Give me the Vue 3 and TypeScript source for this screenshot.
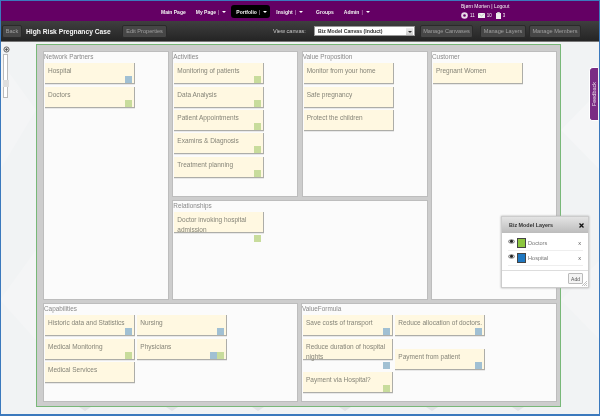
<script setup lang="ts">
interface Note { text: string; tags: string[]; spaced?: boolean }
const n = (text: string, tags: string[] = [], spaced = false): Note => ({ text, tags, spaced })

const partners = [n('Hospital', ['blue']), n('Doctors', ['green'])]
const activities = [
  n('Monitoring of patients', ['green']), n('Data Analysis', ['green']), n('Patient Appointments', ['green']),
  n('Examins & Diagnosis', ['green']), n('Treatment planning', ['green'])
]
const value = [n('Monitor from your home'), n('Safe pregnancy'), n('Protect the children')]
const customer = [n('Pregnant Women')]
const relationships = [n('Doctor invoking hospital admission', ['green'])]
const capA = [n('Historic data and Statistics', ['blue']), n('Medical Monitoring', ['green']), n('Medical Services')]
const capB = [n('Nursing', ['blue']), n('Physicians', ['blue', 'green'])]
const vfA = [n('Save costs of transport', ['blue']), n('Reduce duration of hospital nights', ['blue'], true), n('Payment via Hospital?', ['green'])]
const vfB = [n('Reduce allocation of doctors.', ['blue'], true), n('Payment from patient', ['blue'])]

const cells = [
  { cls: 'c-partners', title: 'Network Partners', cols: [partners] },
  { cls: 'c-activities', title: 'Activities', cols: [activities] },
  { cls: 'c-value', title: 'Value Proposition', cols: [value] },
  { cls: 'c-customer', title: 'Customer', cols: [customer] },
  { cls: 'c-rel', title: 'Relationships', cols: [relationships] }
]
const bottom = [
  { cls: '', title: 'Capabilities', cols: [capA, capB] },
  { cls: '', title: 'ValueFormula', cols: [vfA, vfB] }
]
const layers = [
  { name: 'Doctors', color: '#8cc63f' },
  { name: 'Hospital', color: '#1f78c1' }
]
const notches = [85, 172, 258, 345, 432, 518]
const notchPoints = (x: number): string => `${x - 6},407 ${x + 6},407 ${x},411`
</script>

<template>
  <div class="frame">
    <svg class="bg" viewBox="0 0 600 416" aria-hidden="true">
      <polygon points="0,60 36,110 0,170" fill="#f4f5f6" />
      <polygon points="561,130 600,90 600,170" fill="#f5f6f7" />
      <polygon points="0,300 36,250 36,340" fill="#f4f5f6" />
      <polygon points="561,300 600,340 600,260" fill="#f4f5f6" />
      <polygon v-for="x in notches" :key="x" :points="notchPoints(x)" fill="#e1e3e5" />
    </svg>

    <header class="topbar">
      <nav class="nav">
        <span class="nav-item main">Main Page</span>
        <span class="nav-item mypage">My Page<i class="sep">|</i><i class="caret"></i></span>
        <span class="nav-item active">Portfolio<i class="sep">|</i><i class="caret"></i></span>
        <span class="nav-item insight">Insight<i class="sep">|</i><i class="caret"></i></span>
        <span class="nav-item groups">Groups</span>
        <span class="nav-item admin">Admin<i class="sep">|</i><i class="caret"></i></span>
      </nav>
      <div class="user">
        <div class="user-name">Bjørn Morten | Logout</div>
        <div class="user-icons">
          <svg width="7" height="7" viewBox="0 0 7 7"><circle cx="3.5" cy="3.5" r="3.3" fill="#e8dce8" /><circle cx="3.5" cy="3.5" r="1.3" fill="#660066" /></svg>
          <span class="count c1">11</span>
          <svg width="7" height="5" viewBox="0 0 7 5"><rect width="7" height="5" fill="#eee" /><path d="M0 0l3.5 3L7 0" fill="none" stroke="#999" stroke-width=".5" /></svg>
          <span class="count c2">10</span>
          <svg width="5" height="7" viewBox="0 0 5 7"><rect y="1" width="5" height="6" fill="#eee" /><rect x="1.2" width="2.6" height="1.4" fill="#ccc" /></svg>
          <span class="count">3</span>
        </div>
      </div>
    </header>

    <div class="toolbar">
      <button class="btn back">Back</button>
      <span class="case-title">High Risk Pregnancy Case</span>
      <button class="btn edit">Edit Properties</button>
      <span class="view-label">View canvas:</span>
      <div class="select">
        <span>Biz Model Canvas (Induct)</span>
        <i class="select-arrow"></i>
      </div>
      <button class="btn canv">Manage Canvases</button>
      <button class="btn lay">Manage Layers</button>
      <button class="btn mem">Manage Members</button>
    </div>

    <div class="stage">
      <div class="zoom">
        <svg class="zoom-icon" width="7" height="7" viewBox="0 0 7 7"><circle cx="3.5" cy="3.5" r="2.6" fill="#ddd" stroke="#666" stroke-width="1" /><path d="M2 3.5h3M3.5 2v3" stroke="#444" stroke-width=".7" /></svg>
        <div class="zoom-track"><div class="zoom-thumb"></div></div>
      </div>

      <main class="canvas">
        <div class="top-grid">
          <section v-for="c in cells" :key="c.title" class="cell" :class="c.cls">
            <h3 class="cell-title">{{ c.title }}</h3>
            <div class="cell-body">
              <div v-for="(col, i) in c.cols" :key="i" class="col">
                <article v-for="note in col" :key="note.text" class="note" :class="{ spaced: note.spaced }">
                  <p class="note-text">{{ note.text }}</p>
                  <div class="tags"><b v-for="t in note.tags" :key="t" class="tag" :class="t"></b></div>
                </article>
              </div>
            </div>
          </section>
        </div>
        <div class="bottom-grid">
          <section v-for="c in bottom" :key="c.title" class="cell">
            <h3 class="cell-title">{{ c.title }}</h3>
            <div class="cell-body">
              <div v-for="(col, i) in c.cols" :key="i" class="col">
                <article v-for="note in col" :key="note.text" class="note" :class="{ spaced: note.spaced }">
                  <p class="note-text">{{ note.text }}</p>
                  <div class="tags"><b v-for="t in note.tags" :key="t" class="tag" :class="t"></b></div>
                </article>
              </div>
            </div>
          </section>
        </div>
      </main>
    </div>

    <div class="feedback"><span>Feedback</span></div>

    <aside class="layers">
      <div class="layers-head">
        <span>Biz Model Layers</span>
        <svg class="close" width="5" height="5" viewBox="0 0 5 5"><path d="M.5 .5l4 4M4.5 .5l-4 4" stroke="#111" stroke-width="1.3" /></svg>
      </div>
      <div class="layers-list">
        <div v-for="l in layers" :key="l.name" class="layer-row">
          <svg class="eye" width="7" height="5" viewBox="0 0 7 5"><path d="M0 2.5C1.5 .3 5.5 .3 7 2.5 5.5 4.7 1.5 4.7 0 2.5z" fill="#ddd" stroke="#333" stroke-width=".6" /><circle cx="3.5" cy="2.3" r="1.5" fill="#222" /></svg>
          <i class="swatch" :style="{ background: l.color }"></i>
          <span class="layer-name">{{ l.name }}</span>
          <span class="layer-x">x</span>
        </div>
      </div>
      <div class="layers-foot"><button class="add">Add</button></div>
      <svg class="grip" width="5" height="5" viewBox="0 0 5 5"><path d="M5 0L0 5M5 2L2 5M5 4L4 5" stroke="#999" stroke-width=".6" /></svg>
    </aside>
  </div>
</template>

<style>
html, body { margin: 0; padding: 0; }
</style>

<style scoped>
.frame {
  position: relative;
  width: 600px;
  height: 416px;
  box-sizing: border-box;
  overflow: hidden;
  border: solid #3b79bd;
  border-width: 1px 1px 2px 1px;
  background: #f1f3f4;
  font-family: "Liberation Sans", Arial, sans-serif;
  display: flex;
  flex-direction: column;
  filter: blur(0.3px);
}
.bg { position: absolute; left: -1px; top: -1px; width: 600px; height: 416px; }

.topbar {
  position: relative;
  height: 20px;
  flex: none;
  background: #640064;
  color: #f2f2f2;
  font-size: 5px;
  font-weight: 700;
}
.nav { position: absolute; left: 0; top: 4px; display: flex; align-items: center; height: 13px; }
.nav-item { white-space: nowrap; display: flex; align-items: center; height: 13px; }
.main { margin-left: 160px; }
.mypage { margin-left: 10px; }
.active { margin-left: 5px; padding: 0 7px 0 5px; background: #000; border-radius: 3px; width: 27px; }
.insight { margin-left: 6px; }
.groups { margin-left: 13px; }
.admin { margin-left: 10px; }
.sep { font-style: normal; font-weight: 400; margin: 0 2px 0 2px; color: #d9bcd9; }
.caret { width: 0; height: 0; border: 1.5px solid transparent; border-top: 2px solid #fff; border-bottom: 0; margin-left: 1px; border-left-width: 2px; border-right-width: 2px; }
.user { position: absolute; left: 460px; top: 2px; }
.user-name { font-weight: 400; font-size: 5px; line-height: 6px; white-space: nowrap; }
.user-icons { display: flex; align-items: center; height: 8px; margin-top: 2px; font-weight: 400; }
.count { margin-left: 2px; font-size: 4.5px; }
.c1 { margin-right: 3px; }
.c2 { margin-right: 4px; }

.toolbar {
  flex: none;
  height: 20px;
  display: flex;
  align-items: center;
  background: linear-gradient(#3f3f3f, #242424);
  border-bottom: 1px solid #777;
  box-sizing: content-box;
  color: #c8c8c8;
  font-size: 5.6px;
}
.btn {
  font: 5.6px "Liberation Sans", Arial, sans-serif;
  height: 13px;
  padding: 0;
  color: #a0a0a0;
  background: #464646;
  border: 1px solid #2a2a2a;
  border-radius: 2px;
  white-space: nowrap;
}
.back { margin-left: 1px; width: 20px; }
.case-title { margin-left: 4px; width: 96px; color: #f6f6f6; font-weight: 700; font-size: 6.7px; white-space: nowrap; }
.edit { width: 45px; }
.view-label { margin-left: 106px; width: 41px; white-space: nowrap; }
.select {
  width: 101px;
  height: 10px;
  box-sizing: border-box;
  background: #fff;
  border: 1px solid #999;
  display: flex;
  align-items: center;
  justify-content: space-between;
  padding: 0 1px 0 3px;
  color: #333;
  font-weight: 700;
  font-size: 5.2px;
  white-space: nowrap;
}
.select-arrow { width: 7px; height: 7px; background: linear-gradient(#eee, #ccc); position: relative; border: 0; }
.select-arrow::after { content: ""; position: absolute; left: 1.5px; top: 3px; border: 2px solid transparent; border-top: 2px solid #333; border-bottom: 0; }
.canv { margin-left: 5px; width: 53px; }
.lay { margin-left: 7px; width: 46px; }
.mem { margin-left: 3px; width: 52px; }

.stage { position: relative; flex: 1; display: flex; align-items: flex-start; min-height: 0; }
.zoom { width: 35px; flex: none; display: flex; flex-direction: column; align-items: flex-start; padding: 4px 0 0 2px; box-sizing: border-box; }
.zoom-track { margin-top: 1px; position: relative; width: 5px; height: 44px; background: #fff; border: 1px solid #bbb; box-sizing: border-box; }
.zoom-thumb { position: absolute; left: -1px; right: -2px; top: 25px; height: 7px; background: #dedede; }
.zoom-icon { display: block; }

.canvas {
  box-sizing: border-box;
  width: 525px;
  height: 363px;
  margin-top: 2px;
  padding: 6px 3px 4px 6px;
  background: #cdcdcd;
  border: 1px solid #78b878;
  display: flex;
  flex-direction: column;
  gap: 3px;
}
.top-grid {
  display: grid;
  grid-template-columns: repeat(4, 126px);
  grid-template-rows: 146px 100px;
  column-gap: 3.33px;
  row-gap: 3px;
}
.bottom-grid {
  display: grid;
  grid-template-columns: 255px 256px;
  column-gap: 3px;
  height: 99px;
}
.c-partners { grid-row: 1 / span 2; }
.c-customer { grid-column: 4; grid-row: 1 / span 2; }
.c-rel { grid-column: 2 / span 2; grid-row: 2; }

.cell { background: #fbfbfb; min-width: 0; padding: 0 2px; box-sizing: border-box; outline: 1px solid #bdbdbd; outline-offset: -1px; }
.cell-title { margin: 0 0 0 -1px; height: 12.3px; font-weight: 400; font-size: 6.4px; line-height: 12px; color: #8a8a8a; white-space: nowrap; }
.cell-body { display: flex; gap: 2.3px; }
.col { display: flex; flex-direction: column; gap: 2.33px; width: 90px; }
.note {
  box-sizing: border-box;
  width: 90px;
  height: 21px;
  background: #fff8e1;
  border-right: 1px solid #adada8;
  border-bottom: 1px solid #adada8;
  box-shadow: 0 1px 0 #e8e8e8;
  padding: 3px 2px 0 3px;
}
.note.spaced { margin-bottom: 10px; }
.note-text { margin: 0; font-size: 6.5px; line-height: 10px; color: #858478; }
.tags { display: flex; justify-content: flex-end; }
.tag { display: block; width: 7px; height: 7px; }
.blue { background: #a1c0d3; }
.green { background: #c8dc9c; }

.feedback {
  position: absolute;
  left: 588px;
  top: 66px;
  width: 9px;
  height: 54px;
  background: #7a2b84;
  border: 1px solid #fff;
  border-right: 0;
  border-radius: 4px 0 0 3px;
  box-sizing: border-box;
  display: flex;
  align-items: center;
  justify-content: center;
  color: #e8dce8;
  font-size: 5.5px;
}
.feedback span { writing-mode: vertical-rl; transform: rotate(180deg); }

.layers {
  position: absolute;
  left: 500px;
  top: 215px;
  width: 88px;
  height: 72px;
  background: #fff;
  border: 1px solid #ccc;
  box-shadow: 0 0 2px #aaa;
  box-sizing: border-box;
  color: #555;
}
.layers-head {
  height: 16px;
  display: flex;
  align-items: center;
  justify-content: space-between;
  padding: 0 4px 0 7px;
  background: linear-gradient(#e4e4e4, #bcbcbc);
  font-size: 5.4px;
  font-weight: 700;
  color: #333;
  white-space: nowrap;
}
.layers-list { padding: 3px 5px 0 6px; }
.layer-row { height: 15px; box-sizing: border-box; padding-top: 2px; border-bottom: 1px solid #eee; display: flex; align-items: flex-start; font-size: 5.6px; }
.eye { margin-top: 1px; flex: none; }
.swatch { width: 9px; height: 10px; box-sizing: border-box; border: 1px solid #444; margin-left: 2px; flex: none; }
.layer-name { margin-left: 2px; flex: 1; line-height: 10px; color: #777; }
.layer-x { line-height: 10px; margin-right: 2px; }
.layers-foot { border-top: 1px solid #ddd; margin-top: 4px; padding: 2px 5px 0 0; display: flex; justify-content: flex-end; }
.add { font: 5px "Liberation Sans", Arial, sans-serif; width: 15px; height: 11px; padding: 0; color: #555; background: #f4f4f4; border: 1px solid #bbb; border-radius: 1px; }
.grip { position: absolute; right: 1px; bottom: 1px; }
</style>
